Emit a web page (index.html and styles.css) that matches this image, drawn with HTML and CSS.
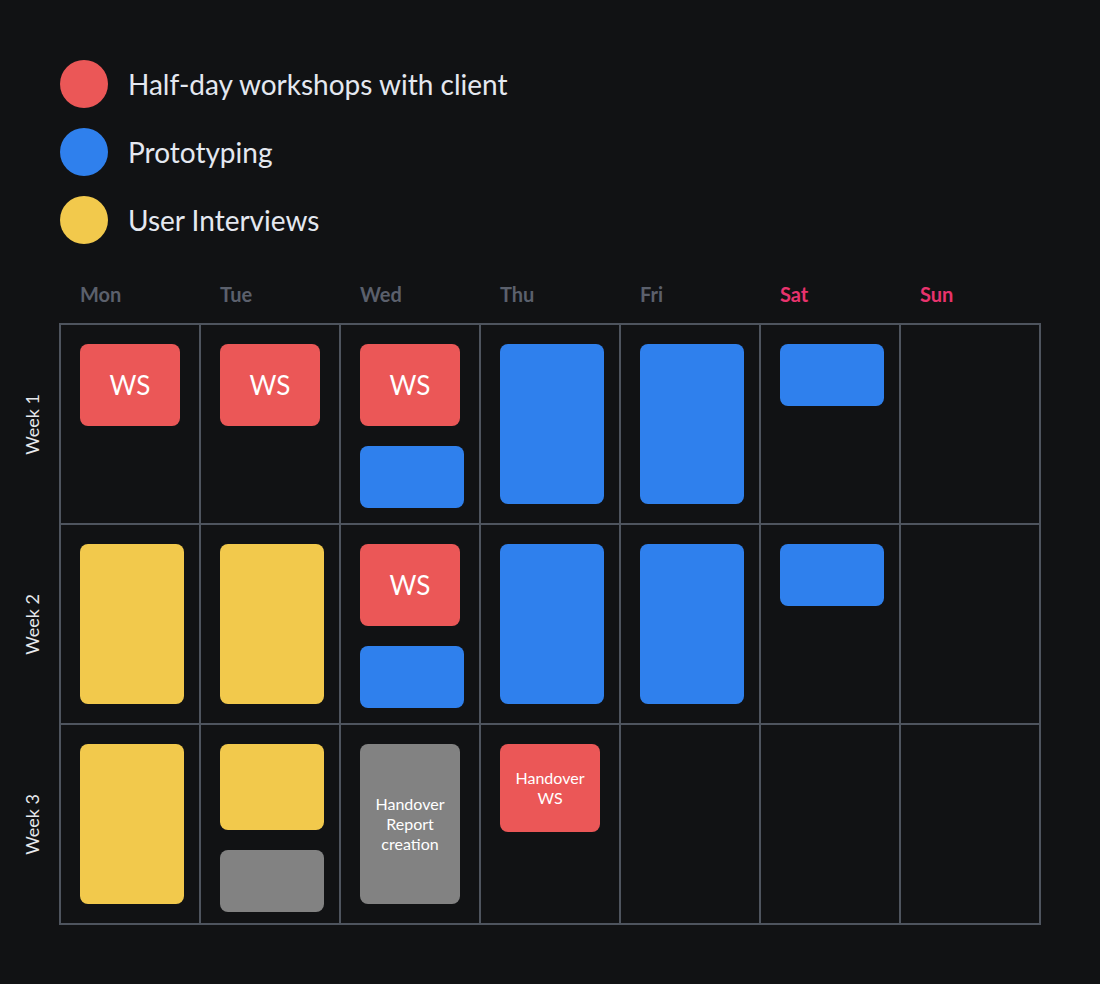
FILE: index.html
```html
<!DOCTYPE html>
<html lang="en">
<head>
<meta charset="utf-8">
<title>Project schedule</title>
<link rel="stylesheet" href="styles.css">
</head>
<body>
<div class="page">
  <ul class="legend">
    <li class="legend-item"><span class="dot red"></span><span class="legend-text">Half-day workshops with client</span></li>
    <li class="legend-item"><span class="dot blue"></span><span class="legend-text">Prototyping</span></li>
    <li class="legend-item"><span class="dot yellow"></span><span class="legend-text">User Interviews</span></li>
  </ul>

  <div class="calendar">
    <div class="corner"></div>
    <div class="days">
      <span class="day">Mon</span>
      <span class="day">Tue</span>
      <span class="day">Wed</span>
      <span class="day">Thu</span>
      <span class="day">Fri</span>
      <span class="day weekend">Sat</span>
      <span class="day weekend">Sun</span>
    </div>

    <div class="weeks">
      <div class="week"><span class="week-text">Week 1</span></div>
      <div class="week"><span class="week-text">Week 2</span></div>
      <div class="week"><span class="week-text">Week 3</span></div>
    </div>

    <div class="board">
      <!-- Week 1 -->
      <div class="cell"><div class="block red ws">WS</div></div>
      <div class="cell"><div class="block red ws">WS</div></div>
      <div class="cell"><div class="block red ws">WS</div><div class="block blue short"></div></div>
      <div class="cell"><div class="block blue tall"></div></div>
      <div class="cell"><div class="block blue tall"></div></div>
      <div class="cell"><div class="block blue short"></div></div>
      <div class="cell"></div>
      <!-- Week 2 -->
      <div class="cell"><div class="block yellow tall"></div></div>
      <div class="cell"><div class="block yellow tall"></div></div>
      <div class="cell"><div class="block red ws">WS</div><div class="block blue short"></div></div>
      <div class="cell"><div class="block blue tall"></div></div>
      <div class="cell"><div class="block blue tall"></div></div>
      <div class="cell"><div class="block blue short"></div></div>
      <div class="cell"></div>
      <!-- Week 3 -->
      <div class="cell"><div class="block yellow tall"></div></div>
      <div class="cell"><div class="block yellow mid"></div><div class="block gray short"></div></div>
      <div class="cell"><div class="block gray tall narrow label">Handover<br>Report<br>creation</div></div>
      <div class="cell"><div class="block red handover label">Handover<br>WS</div></div>
      <div class="cell"></div>
      <div class="cell"></div>
      <div class="cell"></div>
    </div>
  </div>
</div>
</body>
</html>
```

FILE: styles.css
```css
html, body {
  margin: 0;
  padding: 0;
  background: #111214;
}

body {
  font-family: Lato, "Open Sans", "Liberation Sans", sans-serif;
  color: #e6e9f0;
}

.page {
  padding-top: 60px;
  width: 1100px;
  height: 984px;
  box-sizing: border-box;
}

.legend {
  list-style: none;
  margin: 0 0 0 60px;
  padding: 0;
  display: flex;
  flex-direction: column;
  gap: 20px;
}

.legend-item {
  display: flex;
  align-items: center;
  gap: 20px;
  height: 48px;
}

.dot {
  width: 48px;
  height: 48px;
  border-radius: 50%;
  flex: none;
}

.legend-text {
  font-size: 28px;
  line-height: 34px;
  color: #e4e8f0;
}

.red { background: #eb5757; }
.blue { background: #2f80ed; }
.yellow { background: #f2c94c; }
.gray { background: #828282; }

.calendar {
  margin-top: 38px;
  display: grid;
  grid-template-columns: 59px auto;
  grid-template-rows: auto auto;
  row-gap: 17px;
}

.days {
  display: grid;
  grid-template-columns: repeat(7, 140px);
  padding-left: 2px;
}

.day {
  padding-left: 19px;
  font-size: 20px;
  line-height: 24px;
  font-weight: 700;
  color: #5b606c;
}

.day.weekend {
  color: #e8336d;
}

.weeks {
  display: grid;
  grid-auto-rows: 198px;
  row-gap: 2px;
  padding-top: 2px;
}

.week {
  display: flex;
  align-items: center;
  justify-content: center;
  padding-left: 4px;
}

.week-text {
  writing-mode: vertical-rl;
  transform: rotate(180deg);
  font-size: 18px;
  line-height: 22px;
  color: #e6e8ec;
  white-space: nowrap;
}

.board {
  display: grid;
  grid-template-columns: repeat(7, 138px);
  grid-auto-rows: 198px;
  gap: 2px;
  padding: 2px;
  background: #4e545e;
  width: max-content;
}

.cell {
  background: #111214;
  padding: 19px;
  display: flex;
  flex-direction: column;
  align-items: flex-start;
  gap: 20px;
}

.block {
  width: 104px;
  border-radius: 8px;
  flex: none;
  color: #ffffff;
  display: flex;
  align-items: center;
  justify-content: center;
  text-align: center;
}

.ws {
  width: 100px;
  height: 82px;
  font-size: 26px;
}

.short { height: 62px; }
.mid { height: 86px; }
.tall { height: 160px; }
.narrow { width: 100px; }

.handover {
  width: 100px;
  height: 88px;
}

.label {
  font-size: 16px;
  line-height: 20px;
}
```
